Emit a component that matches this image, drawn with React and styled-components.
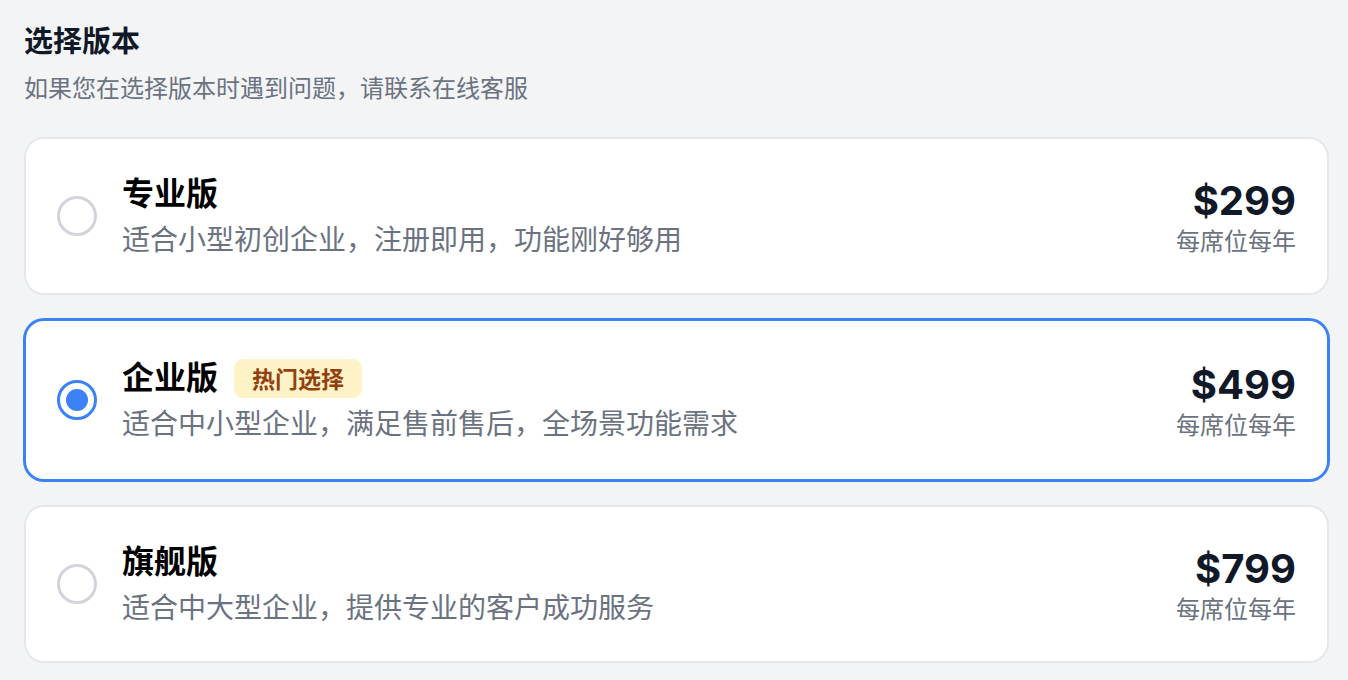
import React, { useState } from 'react'
import styled, { createGlobalStyle } from 'styled-components'

const plans = [
  { id: 'pro', name: '专业版', desc: '适合小型初创企业，注册即用，功能刚好够用', price: '$299' },
  { id: 'biz', name: '企业版', desc: '适合中小型企业，满足售前售后，全场景功能需求', price: '$499', badge: '热门选择' },
  { id: 'max', name: '旗舰版', desc: '适合中大型企业，提供专业的客户成功服务', price: '$799' },
]

const GlobalStyle = createGlobalStyle`
  * { box-sizing: border-box; }
  body {
    margin: 0;
    background: #f3f4f6;
    font-family: Inter, "Noto Sans CJK SC", sans-serif;
  }
`

const Page = styled.div`
  padding: 24px 19px 24px 24px;
`

const Heading = styled.h1`
  margin: 0;
  font-size: 29px;
  line-height: 36px;
  font-weight: 700;
  color: #111827;
`

const Sub = styled.p`
  margin: 13px 0 0;
  font-size: 24px;
  line-height: 32px;
  color: #6b7280;
`

const List = styled.div`
  margin-top: 32px;
  display: flex;
  flex-direction: column;
  gap: 24px;
`

const Card = styled.label`
  display: flex;
  align-items: center;
  gap: 25px;
  padding: ${(p) => (p.$active ? '37px 31px' : '35px 31px')};
  background: #fff;
  border: 2px solid ${(p) => (p.$active ? '#3b82f6' : '#e5e7eb')};
  box-shadow: ${(p) => (p.$active ? '0 0 0 1px #3b82f6' : 'none')};
  border-radius: 20px;
  cursor: pointer;
`

const Radio = styled.span`
  flex: none;
  width: 40px;
  height: 40px;
  border-radius: 50%;
  border: 3px solid ${(p) => (p.$active ? '#3b82f6' : '#d1d5db')};
  display: flex;
  align-items: center;
  justify-content: center;
  &::after {
    content: '';
    width: 22px;
    height: 22px;
    border-radius: 50%;
    background: #3b82f6;
    display: ${(p) => (p.$active ? 'block' : 'none')};
  }
`

const Info = styled.div`
  flex: 1;
  display: flex;
  flex-direction: column;
  gap: 8px;
`

const NameRow = styled.div`
  display: flex;
  align-items: center;
  gap: 16px;
  height: 40px;
`

const Name = styled.span`
  font-size: 32px;
  line-height: 40px;
  font-weight: 700;
  color: #000;
`

const Badge = styled.span`
  display: inline-flex;
  align-items: center;
  height: 39px;
  padding: 0 18px;
  border-radius: 9px;
  background: #fef3c7;
  color: #92400e;
  font-size: 23px;
  font-weight: 700;
`

const Desc = styled.span`
  font-size: 28px;
  line-height: 36px;
  color: #6b7280;
`

const PriceBox = styled.div`
  display: flex;
  flex-direction: column;
  align-items: flex-end;
  gap: 3px;
  padding-top: 5px;
`

const Price = styled.span`
  font-size: 40px;
  line-height: 44px;
  font-weight: 700;
  color: #111827;
`

const Per = styled.span`
  font-size: 24px;
  line-height: 32px;
  color: #6b7280;
`

export default function App() {
  const [selected, setSelected] = useState('biz')
  return (
    <Page>
      <GlobalStyle />
      <Heading>选择版本</Heading>
      <Sub>如果您在选择版本时遇到问题，请联系在线客服</Sub>
      <List>
        {plans.map((plan) => {
          const active = plan.id === selected
          return (
            <Card key={plan.id} $active={active} onClick={() => setSelected(plan.id)}>
              <Radio $active={active} />
              <Info>
                <NameRow>
                  <Name>{plan.name}</Name>
                  {plan.badge && <Badge>{plan.badge}</Badge>}
                </NameRow>
                <Desc>{plan.desc}</Desc>
              </Info>
              <PriceBox>
                <Price>{plan.price}</Price>
                <Per>每席位每年</Per>
              </PriceBox>
            </Card>
          )
        })}
      </List>
    </Page>
  )
}
